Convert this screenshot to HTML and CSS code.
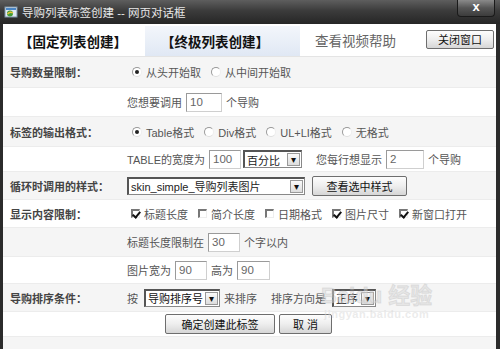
FILE: index.html
```html
<!DOCTYPE html>
<html lang="zh-CN">
<head>
    <meta charset="UTF-8">
    <title>导购列表标签创建 -- 网页对话框</title>
    <link rel="stylesheet" href="styles.css">
</head>
<body>

<div class="window">
    <div class="titlebar">
        <span class="app-icon">
            <svg width="14" height="14" viewBox="0 0 14 14">
                <rect x="1" y="2" width="12" height="10" fill="#dfe9f3" stroke="#7d93a8"/>
                <rect x="2" y="3" width="10" height="2" fill="#4a86c5"/>
                <circle cx="6" cy="8.5" r="3" fill="#3f9a3a"/>
                <path d="M3.5 9 Q6 6 9 8" stroke="#e8c23a" stroke-width="1.4" fill="none"/>
            </svg>
        </span>
        <span class="title-text">导购列表标签创建 -- 网页对话框</span>
        <span class="close-x">x</span>
    </div>

    <div class="tabs">
        <div class="tab tab-active">【固定列表创建】</div>
        <div class="tab tab-other">【终极列表创建】</div>
        <div class="tab-tools">
            <span class="help">查看视频帮助</span>
            <button type="button" class="btn btn-close">关闭窗口</button>
        </div>
    </div>

    <div class="row gray h31">
        <div class="row-label">导购数量限制：</div>
        <div class="row-body">
            <span class="radio on"></span><span class="opt">从头开始取</span>
            <span class="radio"></span><span class="opt">从中间开始取</span>
        </div>
    </div>

    <div class="row h29">
        <div class="row-label"></div>
        <div class="row-body">
            <span>您想要调用</span>
            <span class="field w36">10</span>
            <span>个导购</span>
        </div>
    </div>

    <div class="row gray h30">
        <div class="row-label">标签的输出格式：</div>
        <div class="row-body">
            <span class="radio on"></span><span class="opt">Table格式</span>
            <span class="radio"></span><span class="opt">Div格式</span>
            <span class="radio"></span><span class="opt">UL+LI格式</span>
            <span class="radio"></span><span class="opt">无格式</span>
        </div>
    </div>

    <div class="row h25">
        <div class="row-label"></div>
        <div class="row-body">
            <span>TABLE的宽度为</span>
            <span class="field w32">100</span>
            <span class="select w59 tight"><span class="sel-text">百分比</span><span class="arrow">▾</span></span>
            <span class="spaced">您每行想显示</span>
            <span class="field w38">2</span>
            <span>个导购</span>
        </div>
    </div>

    <div class="row gray h28">
        <div class="row-label">循环时调用的样式：</div>
        <div class="row-body">
            <span class="select w178"><span class="sel-text">skin_simple_导购列表图片</span><span class="arrow">▾</span></span>
            <button type="button" class="btn btn-view">查看选中样式</button>
        </div>
    </div>

    <div class="row h28">
        <div class="row-label">显示内容限制：</div>
        <div class="row-body">
            <span class="check on"></span><span class="opt">标题长度</span>
            <span class="check"></span><span class="opt">简介长度</span>
            <span class="check"></span><span class="opt">日期格式</span>
            <span class="check on"></span><span class="opt">图片尺寸</span>
            <span class="check on"></span><span class="opt">新窗口打开</span>
        </div>
    </div>

    <div class="row gray h29">
        <div class="row-label"></div>
        <div class="row-body">
            <span>标题长度限制在</span>
            <span class="field w32">30</span>
            <span>个字以内</span>
        </div>
    </div>

    <div class="row h27">
        <div class="row-label"></div>
        <div class="row-body">
            <span>图片宽为</span>
            <span class="field w32">90</span>
            <span>高为</span>
            <span class="field w33">90</span>
        </div>
    </div>

    <div class="row gray h28">
        <div class="row-label">导购排序条件：</div>
        <div class="row-body">
            <span>按</span>
            <span class="select w75 nudge"><span class="sel-text dark">导购排序号</span><span class="arrow">▾</span></span>
            <span>来排序</span>
            <span class="spaced">排序方向是</span>
            <span class="select w44 nudge"><span class="sel-text dark">正序</span><span class="arrow">▾</span></span>
        </div>
    </div>

    <div class="row h25">
        <div class="row-label"></div>
        <div class="row-body buttons">
            <button type="button" class="btn btn-ok">确定创建此标签</button>
            <button type="button" class="btn btn-cancel">取 消</button>
        </div>
    </div>

    <div class="row gray h12"></div>

    <div class="watermark">
        <span class="wm-big">Bai<span class="paw">du</span> 经验</span>
        <span class="wm-small">jingyan.baidu.com</span>
    </div>
</div>

</body>
</html>
```

FILE: styles.css
```css
body {
    margin: 0;
    padding: 0;
    width: 500px;
    height: 349px;
    overflow: hidden;
    font-family: "Liberation Sans", "Noto Sans CJK SC", sans-serif;
    font-size: 11px;
    color: #555;
    background: #fff;
}

.window {
    position: relative;
    height: 349px;
    border-left: 3px solid #2b2b2b;
    border-right: 4px solid #2b2b2b;
    box-sizing: border-box;
    background: #fff;
}

.titlebar {
    height: 24px;
    display: flex;
    align-items: center;
    background: linear-gradient(#5e5e5e, #3b3b3b 45%, #262626);
    margin-left: -3px;
    margin-right: -4px;
    padding-left: 4px;
    position: relative;
}

.app-icon {
    width: 14px;
    height: 14px;
    display: flex;
}

.title-text {
    margin-left: 4px;
    color: #e8e8e8;
    font-size: 11.5px;
}

.close-x {
    position: absolute;
    right: 5px;
    top: 0;
    width: 38px;
    height: 17px;
    background: linear-gradient(#8a8a8a, #555 50%, #3c3c3c);
    border: 1px solid #1a1a1a;
    border-top: none;
    border-radius: 0 0 4px 4px;
    color: #fff;
    font-weight: bold;
    font-size: 13px;
    line-height: 14px;
    text-align: center;
    box-sizing: border-box;
}

.tabs {
    height: 33px;
    display: flex;
    align-items: stretch;
    border-bottom: 1px solid #e4e4e4;
    box-sizing: border-box;
}

.tab {
    display: flex;
    align-items: center;
    font-weight: bold;
    font-size: 13.5px;
    color: #111;
    margin-top: 2px;
}

.tab-active {
    width: 142px;
    padding-left: 16px;
    box-sizing: border-box;
}

.tab-other {
    width: 155px;
    padding-left: 16px;
    box-sizing: border-box;
    background: linear-gradient(#f3f6fb, #e0e8f4);
}

.tab-tools {
    flex: 1;
    display: flex;
    align-items: center;
    justify-content: flex-end;
}

.help {
    color: #666;
    font-size: 13.5px;
    margin-right: 30px;
}

.btn {
    font-family: "Liberation Sans", "Noto Sans CJK SC", sans-serif;
    font-size: 11px;
    color: #111;
    background: linear-gradient(#fdfdfd, #eeeeee 50%, #d6d6d6);
    border: 1px solid #6e6e6e;
    border-radius: 2px;
    padding: 0;
    height: 20px;
    box-sizing: border-box;
}

.btn-close {
    width: 68px;
    height: 19px;
    margin-top: -2px;
    margin-right: 2px;
}

.row {
    display: grid;
    grid-template-columns: 124px auto;
    align-items: center;
    border-bottom: 1px solid #ececec;
    box-sizing: border-box;
}

.gray {
    background: #f5f5f5;
}

.h31 { height: 31px; }
.h30 { height: 30px; }
.h29 { height: 29px; }
.h28 { height: 28px; }
.h27 { height: 27px; }
.h25 { height: 25px; }
.h12 { height: 12px; border-bottom: none; }

.row-label {
    padding-left: 7px;
    font-weight: bold;
    color: #444;
    font-size: 11px;
    white-space: nowrap;
}

.row-body {
    display: flex;
    align-items: center;
    gap: 4px;
    white-space: nowrap;
}

.row-body.buttons {
    padding-left: 38px;
}

.radio {
    width: 8px;
    height: 8px;
    border-radius: 50%;
    border: 1px solid #999;
    border-right-color: #eee;
    border-bottom-color: #ddd;
    margin-left: 5px;
    position: relative;
    background: #fff;
    flex-shrink: 0;
}

.radio:first-child {
    margin-left: 5px;
}

.radio.on::after {
    content: "";
    position: absolute;
    left: 2px;
    top: 2px;
    width: 4px;
    height: 4px;
    border-radius: 50%;
    background: #222;
}

.opt {
    margin-right: 1px;
}

.check {
    width: 9px;
    height: 9px;
    border-top: 2px solid #777;
    border-left: 2px solid #777;
    border-right: 1px solid #eee;
    border-bottom: 1px solid #eee;
    box-sizing: border-box;
    margin-left: 5px;
    position: relative;
    background: #fff;
    flex-shrink: 0;
}

.check:first-child {
    margin-left: 4px;
}

.check.on::after {
    content: "";
    position: absolute;
    left: 1px;
    top: -1px;
    width: 3px;
    height: 6px;
    border-right: 2px solid #111;
    border-bottom: 2px solid #111;
    transform: rotate(40deg);
}

.field {
    height: 19px;
    border: 1px solid #9a9a9a;
    border-right-color: #cfcfcf;
    border-bottom-color: #cfcfcf;
    background: #fff;
    color: #666;
    font-size: 11.5px;
    line-height: 17px;
    padding-left: 3px;
    box-sizing: border-box;
    flex-shrink: 0;
}

.w32 { width: 32px; }
.w33 { width: 33px; }
.w36 { width: 36px; }
.w38 { width: 38px; }

.select {
    height: 18px;
    display: flex;
    align-items: center;
    border: 1px solid #888;
    border-left: 2px solid #555;
    border-top: 2px solid #555;
    background: #fff;
    box-sizing: border-box;
    justify-content: space-between;
    flex-shrink: 0;
}

.tight {
    margin-left: -2px;
}

.nudge {
    margin-left: 2px;
}

.w44 { width: 44px; }
.w59 { width: 59px; }
.w75 { width: 76px; }
.w178 { width: 178px; }

.sel-text {
    padding-left: 2px;
    color: #222;
    font-size: 11px;
    overflow: hidden;
}

.sel-text.dark {
    color: #111;
}

.arrow {
    width: 13px;
    height: 13px;
    margin-right: 1px;
    border: 1px solid #999;
    background: linear-gradient(#fafafa, #ddd);
    font-size: 10px;
    line-height: 12px;
    text-align: center;
    color: #111;
    box-sizing: border-box;
    flex-shrink: 0;
}

.spaced {
    margin-left: 10px;
}

.btn-view {
    width: 95px;
    height: 20px;
    margin-left: 3px;
}

.btn-ok {
    width: 110px;
}

.btn-cancel {
    width: 53px;
}

.watermark {
    position: absolute;
    left: 318px;
    top: 284px;
    display: flex;
    flex-direction: column;
    align-items: center;
    color: rgba(215, 215, 215, 0.5);
    pointer-events: none;
}

.wm-big {
    font-size: 22px;
    font-weight: bold;
    line-height: 24px;
    -webkit-text-stroke: 1px rgba(190, 190, 190, 0.35);
}

.wm-small {
    font-size: 11px;
    font-weight: bold;
    letter-spacing: 0.5px;
}
```
